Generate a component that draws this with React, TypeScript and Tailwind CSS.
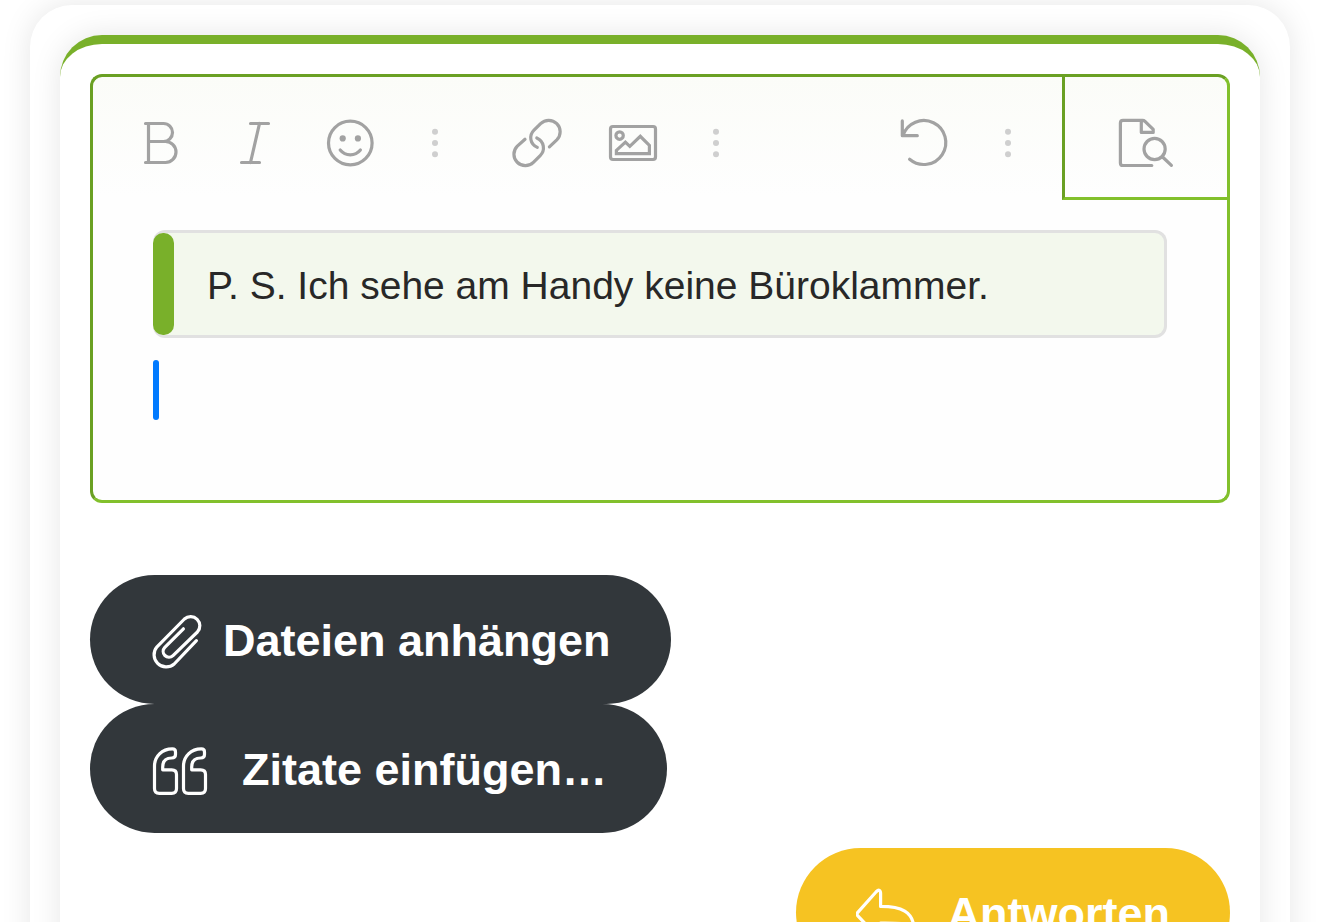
import type { ReactNode } from 'react'
import clsx from 'clsx'

function Icon({ children, className }: { children: ReactNode; className?: string }) {
  return (
    <svg
      viewBox="0 0 60 60"
      className={clsx('size-[60px] shrink-0', className)}
      fill="none"
      stroke="currentColor"
      strokeWidth={3.2}
      strokeLinecap="round"
      strokeLinejoin="round"
      aria-hidden="true"
    >
      {children}
    </svg>
  )
}

function ToolButton({ label, children }: { label: string; children: ReactNode }) {
  return (
    <button
      type="button"
      aria-label={label}
      className="flex w-[95px] items-center justify-center text-[#a2a2a2]"
    >
      <Icon>{children}</Icon>
    </button>
  )
}

function MoreButton({ label }: { label: string }) {
  return (
    <button
      type="button"
      aria-label={label}
      className="flex w-[74px] items-center justify-center text-[#cfcfcf]"
    >
      <Icon>
        <g fill="currentColor" stroke="none">
          <circle cx="30" cy="18.8" r="3" />
          <circle cx="30" cy="30" r="3" />
          <circle cx="30" cy="41.2" r="3" />
        </g>
      </Icon>
    </button>
  )
}

function Toolbar() {
  return (
    <div role="toolbar" aria-label="Formatierung" className="flex h-[123px]">
      <div className="flex flex-1 justify-between pt-3 pr-[17px] pb-[3px] pl-5">
        <div className="flex gap-[17px]">
          <div className="flex">
            <ToolButton label="Fett">
              <path d="M14.5 10.5H32.5a9 9 0 0 1 0 18H17.5M32.5 28.5H34.5a10.5 10.5 0 0 1 0 21H14.5M17.5 10.5v39" />
            </ToolButton>
            <ToolButton label="Kursiv">
              <path d="M24.5 10.5h18M15.5 49.5h18M33.5 10.5l-9 39" />
            </ToolButton>
            <ToolButton label="Smileys">
              <circle cx="29.3" cy="30" r="21.8" />
              <g fill="currentColor" stroke="none">
                <circle cx="21.7" cy="25.4" r="3.1" />
                <circle cx="36.9" cy="25.4" r="3.1" />
              </g>
              <path d="M19.2 37a13 13 0 0 0 20.2 0" />
            </ToolButton>
            <MoreButton label="Weitere Formatierung" />
          </div>
          <div className="flex">
            <ToolButton label="Link einfügen">
              <path d="M42.4 33.8 49.8 26.9A11.4 11.4 0 0 0 33.6 10.7L27 17.2C21.8 22.4 22.8 31 30.3 34.4" />
              <path d="M18 26.2 10.3 33.1A11.4 11.4 0 0 0 26.4 49.3L33.2 42.6C38.4 37.4 37.4 28.4 29.8 25" />
            </ToolButton>
            <ToolButton label="Bild einfügen">
              <rect x="8.5" y="13.5" width="45" height="33" rx="2.4" />
              <circle cx="17.6" cy="22.6" r="3.7" />
              <path
                strokeLinejoin="miter"
                d="M14.4 40.6v-3.2l9-8.3 4.4 4.2 10.5-10 9.1 9v8.3z"
              />
            </ToolButton>
            <MoreButton label="Mehr einfügen" />
          </div>
        </div>
        <div className="flex">
          <ToolButton label="Rückgängig">
            <path d="M8.3 7.9v14.8h15M9 22.3a22 22 0 1 1 6.6 24" />
          </ToolButton>
          <MoreButton label="Weitere Optionen" />
        </div>
      </div>
      <button
        type="button"
        aria-label="Vorschau"
        className="flex w-[165px] items-center justify-center border-b-[3px] border-l-[3px] border-b-[#82c02c] border-l-[#6aa023] pt-3 text-[#a2a2a2]"
      >
        <Icon>
          <path d="M35.8 52.5H7q-2.6 0-2.6-2.6V10q0-2.7 2.6-2.7h19.5q1.5 0 2.5 1l8.2 8v3.1H25.3V7.3" />
          <circle cx="38.6" cy="36" r="10.6" />
          <path d="M46.6 44l8.8 8.4" />
        </Icon>
      </button>
    </div>
  )
}

function Editor() {
  return (
    <div className="rounded-xl border-[3px] border-t-[#6aa023] border-r-[#82c02c] border-b-[#82c02c] border-l-[#6aa023] bg-[linear-gradient(#fbfcf8,#fefefe_120px)]">
      <Toolbar />
      <div
        role="textbox"
        aria-multiline="true"
        aria-label="Antwort"
        tabIndex={0}
        className="px-[60px] pt-[30px] pb-20 outline-none"
      >
        <blockquote className="flex rounded-xl border-y-[3px] border-r-[3px] border-[#e1e1e1] bg-[#f3f8ed]">
          <span className="w-[21px] shrink-0 rounded-[10px] bg-[#79b02a]" />
          <p className="pt-[23px] pb-[19px] pl-[33px] text-[39px] leading-[60px] text-[#282828]">
            P. S. Ich sehe am Handy keine Büroklammer.
          </p>
        </blockquote>
        {/* text cursor */}
        <div className="mt-[22px] h-[60px] w-1.5 rounded-sm bg-[#007aff]" />
      </div>
    </div>
  )
}

const PILL =
  'flex h-[129px] items-center rounded-full px-[60px] text-[45px] leading-[60px] font-bold whitespace-nowrap text-white'

export default function App() {
  return (
    <main className="h-screen overflow-hidden bg-white px-[30px] pt-[5px] font-['Liberation_Sans',Arial,sans-serif]">
      <div className="rounded-[42px] bg-white px-[30px] pt-[30px] pb-[30px] shadow-[0_0_30px_rgba(0,0,0,0.1)]">
        <form
          className="flex flex-col items-start rounded-[42px] border-t-[9px] border-[#79b02a] bg-white p-[30px] shadow-[0_0_30px_rgba(0,0,0,0.1)]"
          onSubmit={(e) => e.preventDefault()}
        >
          <div className="w-full">
            <Editor />
          </div>
          <button type="button" className={clsx(PILL, 'mt-[72px] bg-[#32373b]')}>
            <Icon className="mr-[13px]">
              <path d="M46.4 30.6 24.2 54A12.2 12.2 0 0 1 7 36.8L34.4 9A9.2 9.2 0 0 1 47.4 22L23 45.6A5.8 5.8 0 0 1 14.8 37.4L33.4 18.8" />
            </Icon>
            <span className="pt-0.5">Dateien anhängen</span>
          </button>
          <button type="button" className={clsx(PILL, 'bg-[#32373b]')}>
            <Icon className="mr-8">
              <path d="M4.5 27V49.5q0 4.8 4.8 4.8h12.4q4.8 0 4.8-4.8V35.6q0-4.8-4.8-4.8h-9V28q0-9 9-9 3.8 0 3.8-3.5v-2.6q0-3-3.2-3C12 9.9 4.5 17.5 4.5 27z" />
              <path d="M33.5 27V49.5q0 4.8 4.8 4.8h12.4q4.8 0 4.8-4.8V35.6q0-4.8-4.8-4.8h-9V28q0-9 9-9 3.8 0 3.8-3.5v-2.6q0-3-3.2-3C41 9.9 33.5 17.5 33.5 27z" />
            </Icon>
            <span className="pt-0.5">Zitate einfügen…</span>
          </button>
          <button type="submit" className={clsx(PILL, 'mt-[15px] ml-auto bg-[#f6c322]')}>
            <Icon className="mr-8">
              <path d="M1.6 29.6 20 9q4-4 4.6 1V23.4C44.5 23.4 58 28 58 47 52.5 40 44.5 39.8 24.6 40v11q-.4 5-4.6 1L1.6 32.6q-1.2-1.5 0-3z" />
            </Icon>
            <span className="pt-0.5">Antworten</span>
          </button>
        </form>
      </div>
    </main>
  )
}
